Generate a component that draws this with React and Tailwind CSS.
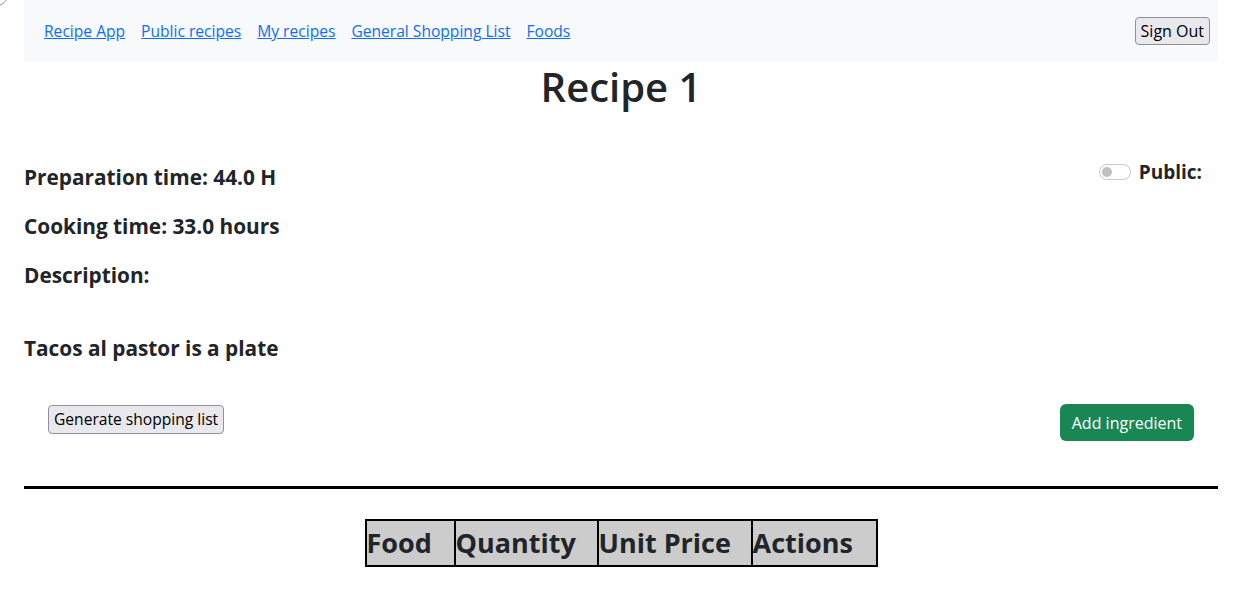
import React from "react";

export default function App() {
  const font = { fontFamily: '"Open Sans", "Noto Sans", sans-serif' };
  return (
    <div className="relative min-h-[595px] bg-white text-[#212529] pl-[24px] pr-[36px]" style={font}>
      <div className="absolute left-[-14px] top-[-16px] w-[22px] h-[22px] rounded-full border border-[#9a9a9a]" />
      <nav className="h-[61px] bg-[#f8f9fa] flex items-center justify-between pl-[20px] pr-[8px]">
        <div className="flex items-center gap-[16px] text-[15.6px] pt-[2px]">
          <a href="#" className="text-[#0d6efd] underline">Recipe App</a>
          <a href="#" className="text-[#0d6efd] underline">Public recipes</a>
          <a href="#" className="text-[#0d6efd] underline">My recipes</a>
          <a href="#" className="text-[#0d6efd] underline">General Shopping List</a>
          <a href="#" className="text-[#0d6efd] underline">Foods</a>
        </div>
        <button className="h-[28px] px-[5px] text-[16px] text-black bg-[#e9e9ed] border border-[#8f8f9d] rounded-[4px]">Sign Out</button>
      </nav>
      <h1 className="text-center text-[40px] font-semibold leading-[48px] mt-[2px]">Recipe 1</h1>
      <div className="flex justify-between mt-[54px]">
        <div className="text-[20.8px] font-bold leading-[24px]">
          <p className="mb-[25px]">Preparation time: 44.0 H</p>
          <p className="mb-[25px]">Cooking time: 33.0 hours</p>
          <p className="mb-[49px]">Description:</p>
          <p>Tacos al pastor is a plate</p>
        </div>
        <div className="flex items-start gap-[8px] pr-[16px] -mt-[5px]">
          <span className="mt-[4px] w-[32px] h-[16px] rounded-full border border-[#c8c8c8] flex items-center px-[2px]">
            <span className="w-[10px] h-[10px] rounded-full bg-[#c0c0c0]" />
          </span>
          <span className="text-[19px] font-bold leading-[24px]">Public:</span>
        </div>
      </div>
      <div className="flex justify-between items-start mt-[44px] pl-[24px] pr-[24px]">
        <button className="mt-[1px] h-[29px] px-[5px] text-[15.6px] text-black bg-[#e9e9ed] border border-[#8f8f9d] rounded-[4px]">Generate shopping list</button>
        <button className="h-[37px] px-[12px] text-[16px] text-white bg-[#198754] rounded-[6px]">Add ingredient</button>
      </div>
      <div className="mt-[45px] h-[3px] bg-black" />
      <div className="flex justify-center mt-[30px]">
        <table className="border-collapse border-2 border-black">
          <thead>
            <tr className="bg-[#cccccc] text-[27px] font-bold leading-[44px]">
              <th className="w-[89px] border-2 border-black text-left whitespace-nowrap">Food</th>
              <th className="w-[143px] border-2 border-black text-left whitespace-nowrap">Quantity</th>
              <th className="w-[154px] border-2 border-black text-left whitespace-nowrap">Unit Price</th>
              <th className="w-[125px] border-2 border-black text-left whitespace-nowrap">Actions</th>
            </tr>
          </thead>
        </table>
      </div>
    </div>
  );
}
